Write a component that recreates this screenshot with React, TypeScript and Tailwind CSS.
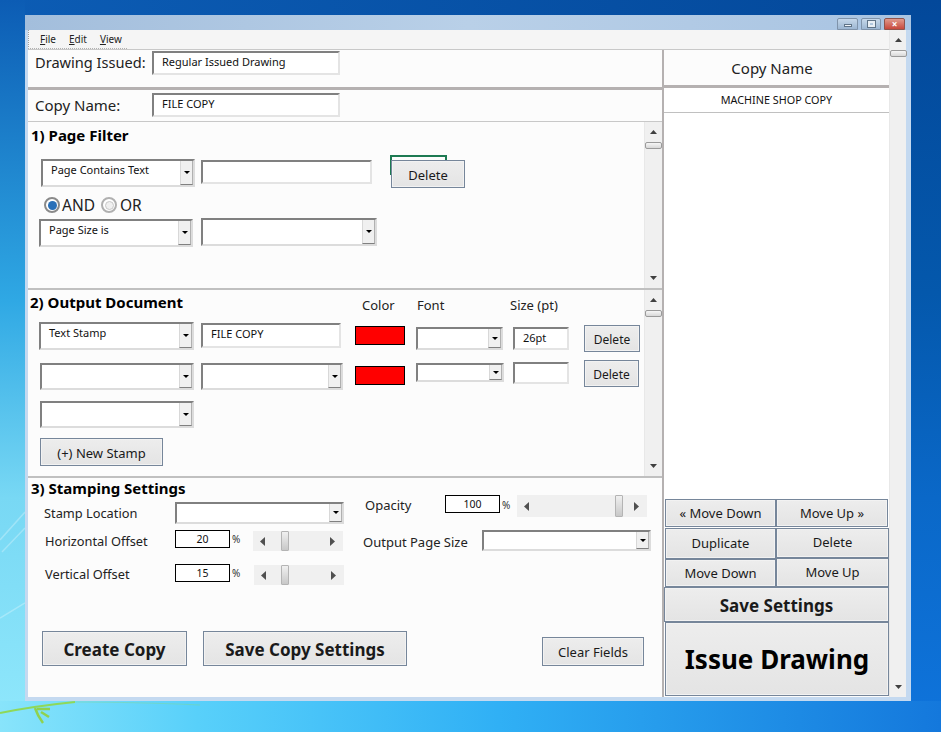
import type { ReactNode } from "react";

const font = "font-['Noto_Sans','Open_Sans',sans-serif]";

function Triangle({ dir }: { dir: "up" | "down" | "left" | "right" }) {
  const points = {
    up: "0,4 3.5,0 7,4",
    down: "0,0 7,0 3.5,4",
    left: "5,0 5,9 0,4.5",
    right: "0,0 0,9 5,4.5",
  }[dir];
  const box = dir === "up" || dir === "down" ? "0 0 7 4" : "0 0 5 9";
  const size = dir === "up" || dir === "down" ? "w-[7px] h-[4px]" : "w-[5px] h-[9px]";
  return (
    <svg viewBox={box} className={size}>
      <polygon points={points} fill={dir === "left" || dir === "right" ? "#505050" : "#404040"} />
    </svg>
  );
}

function Select({ className, text }: { className: string; text?: string }) {
  return (
    <div className={`flex shrink-0 bg-white border-2 border-t-[#808080] border-l-[#808080] border-r-[#dcdcdc] border-b-[#dcdcdc] ${className}`}>
      <div className="flex-1 pl-[8px] pt-[1px] text-[11px] leading-[16px] text-[#111]">{text}</div>
      <div className="w-[13px] flex items-center justify-center bg-[#f0f0f0] border-l border-l-[#d8d8d8] border-b border-b-[#808080] border-r border-r-[#b0b0b0]">
        <svg viewBox="0 0 6 3" className="w-[6px] h-[3px]">
          <polygon points="0,0 6,0 3,3" fill="#000" />
        </svg>
      </div>
    </div>
  );
}

function Input({ className, text }: { className: string; text?: string }) {
  return (
    <div className={`shrink-0 bg-white border-2 border-t-[#808080] border-l-[#808080] border-r-[#e4e4e4] border-b-[#e4e4e4] pt-[1px] text-[11px] leading-[16px] text-[#111] ${className}`}>
      {text}
    </div>
  );
}

function Btn({ className, children }: { className: string; children: ReactNode }) {
  return (
    <button className={`shrink-0 flex items-center justify-center border border-[#76869a] bg-[linear-gradient(#ededed,#e4e4e4)] shadow-[inset_0_0_0_1px_#f2f2f2] text-[#1a1a1a] ${className}`}>
      {children}
    </button>
  );
}

function VScroll({ className }: { className: string }) {
  return (
    <div className={`shrink-0 flex flex-col items-center bg-[#f0f0f0] border-l border-l-[#e8e8e8] ${className}`}>
      <div className="mt-[8px]">
        <Triangle dir="up" />
      </div>
      <div className="mt-[8px] w-[17px] h-[7px] rounded-[2px] border border-[#9a9a9a] bg-[linear-gradient(#f6f6f6,#d8d8d8)]" />
      <div className="flex-1" />
      <div className="mb-[8px]">
        <Triangle dir="down" />
      </div>
    </div>
  );
}

function HScroll({ className, thumbClass }: { className: string; thumbClass: string }) {
  return (
    <div className={`shrink-0 flex items-center bg-[#f0f0f0] ${className}`}>
      <div className="ml-[7px]">
        <Triangle dir="left" />
      </div>
      <div className={`h-full w-[8px] rounded-[1px] border border-[#b4b4b4] bg-[linear-gradient(#f0f0f0,#c8c8c8)] ${thumbClass}`} />
      <div className="flex-1" />
      <div className="mr-[8px]">
        <Triangle dir="right" />
      </div>
    </div>
  );
}

function Radio({ on }: { on: boolean }) {
  return (
    <div className={`shrink-0 w-[16px] h-[16px] rounded-full border-2 bg-white flex items-center justify-center ${on ? "border-[#8a8a8a]" : "border-[#b0b0b0]"}`}>
      <div className={on ? "w-[9px] h-[9px] rounded-full bg-[#2a70b8]" : "w-[9px] h-[9px] rounded-full border border-[#c8c8c8] bg-[#f0f0f0]"} />
    </div>
  );
}

function NumBox({ value }: { value: string }) {
  return (
    <div className="shrink-0 w-[55px] h-[18px] pt-[2px] border border-black bg-white flex items-center justify-center text-[10.5px] text-[#111]">
      {value}
    </div>
  );
}

function Percent({ className }: { className: string }) {
  return <div className={`shrink-0 text-[10px] leading-[18px] text-[#333] ${className}`}>%</div>;
}

function MenuItem({ first, rest }: { first: string; rest: string }) {
  return (
    <span className="text-[10px] text-[#222]">
      <span className="underline">{first}</span>
      {rest}
    </span>
  );
}

export default function App() {
  return (
    <div className={`${font} relative w-[941px] h-[732px] overflow-hidden pt-[15px] pl-[25px] bg-[linear-gradient(90deg,#0c5cb4,#03489a)]`}>
      {/* desktop wallpaper */}
      <div className="absolute left-0 top-0 w-[25px] h-[732px] bg-[linear-gradient(#0c5cb4_0%,#2fa8e4_41%,#78d8f4_68%,#90e8fc_100%)]" />
      <div className="absolute right-0 top-0 w-[30px] h-[732px] bg-[linear-gradient(#03489a_0%,#0458ac_40%,#0a68c8_68%,#0f74dc_100%)]" />
      <div className="absolute left-0 bottom-0 w-[941px] h-[31px] bg-[linear-gradient(90deg,#88e4fb_0%,#58d0fa_21%,#30b0f5_53%,#1478dc_100%)]" />
      <svg viewBox="0 0 25 140" className="absolute left-0 top-[500px] w-[25px] h-[140px]">
        <path d="M0 40 L25 12 M2 52 L25 28 M0 118 L25 103" stroke="#ffffff" strokeOpacity="0.28" strokeWidth="1.5" fill="none" />
      </svg>
      <svg viewBox="0 0 200 32" className="absolute left-0 top-[700px] w-[200px] h-[32px]">
        <path d="M0 13 C20 9 45 5 75 2" stroke="#8fd858" strokeWidth="2" fill="none" />
        <path d="M75 2 C110 2 160 3 200 5" stroke="#7cd8a0" strokeOpacity="0.5" strokeWidth="1" fill="none" />
        <path d="M35 8 C37 14 40 19 43 23 M37 9 L50 9 M41 12 L49 17" stroke="#8fd24f" strokeWidth="2.5" fill="none" />
      </svg>

      {/* window */}
      <div className="relative w-[886px] h-[686px] flex flex-col bg-[#c4d9f0]">
        <div className="h-[15px] flex justify-end gap-[3px] pt-[3px] pr-[6px] bg-[linear-gradient(90deg,#a3bedc,#b9d0e8_50%,#a9c4e2)]">
          <div className="w-[21px] h-[12px] flex items-end justify-center pb-[2px] rounded-t-[2px] border border-[#7f93aa] bg-[linear-gradient(#c6d8ea,#9cb6d2)]">
            <div className="w-[8px] h-[3px] bg-[#f0f4f8] border border-[#607488]" />
          </div>
          <div className="w-[20px] h-[12px] flex items-center justify-center rounded-t-[2px] border border-[#7f93aa] bg-[linear-gradient(#c6d8ea,#9cb6d2)]">
            <div className="w-[7px] h-[6px] border-2 border-[#e8eef4] outline outline-1 outline-[#607488]" />
          </div>
          <div className="w-[21px] h-[12px] flex items-center justify-center rounded-t-[2px] border border-[#90544c] bg-[linear-gradient(#e09a8c,#c8483c)] text-[10px] leading-none font-bold text-white">
            ×
          </div>
        </div>

        <div className="h-[667px] flex pl-[3px] pr-[5px]">
          <div className="w-[861px] flex flex-col bg-[#fcfcfc]">
            {/* menu */}
            <div className="h-[20px] shrink-0 bg-[#f5f5f5] border-b border-b-[#c8c8c8]">
              <div className="w-[99px] h-[19px] flex items-center gap-[13px] pl-[11px] border-l border-dotted border-l-[#a0a0a0] border-b border-b-[#b0b0b0]">
                <MenuItem first="F" rest="ile" />
                <MenuItem first="E" rest="dit" />
                <MenuItem first="V" rest="iew" />
              </div>
            </div>

            <div className="flex-1 flex min-h-0">
              {/* left column */}
              <div className="w-[636px] flex flex-col border-r-2 border-r-[#b5b1b1]">
                <div className="h-[37px] shrink-0 flex items-start">
                  <div className="w-[124px] pl-[7px] text-[14.6px] leading-[24px] text-[#222]">Drawing Issued:</div>
                  <Input className="w-[188px] h-[24px] pl-[8px] mt-[1px]" text="Regular Issued Drawing" />
                </div>
                <div className="h-[3px] shrink-0 bg-[#b5b1b1]" />
                <div className="h-[32px] shrink-0 flex items-start border-b border-b-[#c8c8c8]">
                  <div className="w-[124px] pl-[7px] pt-[3px] text-[15px] leading-[24px] text-[#222]">Copy Name:</div>
                  <Input className="w-[188px] h-[24px] pl-[8px] mt-[3px]" text="FILE COPY" />
                </div>

                {/* section 1 */}
                <div className="h-[166px] shrink-0 flex">
                  <div className="flex-1">
                    <div className="h-[33px] pl-[3px] pt-[2px] text-[15px] leading-[22px] font-bold text-black">1) Page Filter</div>
                    <div className="flex items-start">
                      <Select className="w-[154px] h-[28px] ml-[13px] mt-[4px]" text="Page Contains Text" />
                      <Input className="w-[171px] h-[24px] ml-[6px] mt-[5px]" />
                      <div className="relative ml-[18px] w-[75px] h-[33px]">
                        <div className="absolute left-0 top-0 w-[57px] h-[20px] border-2 border-[#1d7a52]" />
                        <Btn className="absolute left-[1px] top-[5px] w-[74px] h-[28px] pt-[3px] text-[13px]">Delete</Btn>
                      </div>
                    </div>
                    <div className="flex items-center mt-[8px] ml-[16px] h-[18px] text-[15.5px] leading-[18px] text-[#222]">
                      <Radio on />
                      <span className="ml-[2px] w-[39px]">AND</span>
                      <Radio on={false} />
                      <span className="ml-[3px]">OR</span>
                    </div>
                    <div className="flex items-start mt-[4px]">
                      <Select className="w-[154px] h-[28px] ml-[11px] mt-[1px]" text="Page Size is" />
                      <Select className="w-[176px] h-[28px] ml-[8px]" />
                    </div>
                  </div>
                  <VScroll className="w-[18px]" />
                </div>
                <div className="h-[2px] shrink-0 bg-[#c0c0c0]" />

                {/* section 2 */}
                <div className="h-[186px] shrink-0 flex">
                  <div className="flex-1">
                    <div className="h-[32px] flex items-start">
                      <div className="w-[334px] pl-[2px] pt-[1px] text-[15px] leading-[22px] font-bold text-black">2) Output Document</div>
                      <div className="w-[55px] pt-[6px] text-[13px] leading-[18px] text-[#222]">Color</div>
                      <div className="w-[93px] pt-[6px] text-[13px] leading-[18px] text-[#222]">Font</div>
                      <div className="pt-[6px] text-[13px] leading-[18px] text-[#222]">Size (pt)</div>
                    </div>
                    <div className="flex items-start">
                      <Select className="w-[155px] h-[28px] ml-[11px]" text="Text Stamp" />
                      <Input className="w-[140px] h-[25px] ml-[7px] mt-[1px] pl-[8px]" text="FILE COPY" />
                      <div className="w-[50px] h-[19px] ml-[14px] mt-[4px] bg-[#ff0000] border border-black" />
                      <Select className="w-[87px] h-[23px] ml-[11px] mt-[5px]" />
                      <Input className="w-[56px] h-[23px] ml-[10px] mt-[5px] pl-[8px]" text="26pt" />
                      <Btn className="w-[56px] h-[27px] ml-[15px] mt-[3px] pt-[2px] text-[12px]">Delete</Btn>
                    </div>
                    <div className="flex items-start mt-[8px]">
                      <Select className="w-[154px] h-[27px] ml-[12px] mt-[3px]" />
                      <Select className="w-[142px] h-[27px] ml-[7px] mt-[3px]" />
                      <div className="w-[50px] h-[19px] ml-[12px] mt-[6px] bg-[#ff0000] border border-black" />
                      <Select className="w-[88px] h-[19px] ml-[11px] mt-[3px]" />
                      <Input className="w-[56px] h-[22px] ml-[9px] mt-[2px]" />
                      <Btn className="w-[55px] h-[27px] ml-[15px] pt-[3px] text-[12px]">Delete</Btn>
                    </div>
                    <Select className="w-[154px] h-[27px] ml-[12px] mt-[11px]" />
                    <Btn className="w-[123px] h-[28px] ml-[12px] mt-[10px] pt-[3px] text-[13px]">(+) New Stamp</Btn>
                  </div>
                  <VScroll className="w-[18px]" />
                </div>
                <div className="h-[2px] shrink-0 bg-[#c0c0c0]" />

                {/* section 3 */}
                <div className="flex-1">
                  <div className="flex items-start">
                    <div className="w-[335px]">
                      <div className="h-[24px] pl-[3px] -mt-[1px] mb-[1px] text-[15px] leading-[22px] font-bold text-black">3) Stamping Settings</div>
                      <div className="flex items-start">
                        <div className="w-[147px] pl-[16px] text-[12.8px] leading-[22px] text-[#222]">Stamp Location</div>
                        <Select className="w-[169px] h-[22px]" />
                      </div>
                      <div className="flex items-start mt-[6px]">
                        <div className="w-[147px] pl-[17px] text-[12.8px] leading-[22px] text-[#222]">Horizontal Offset</div>
                        <NumBox value="20" />
                        <Percent className="ml-[2px] w-[21px]" />
                        <HScroll className="w-[90px] h-[20px] mt-[1px]" thumbClass="ml-[16px]" />
                      </div>
                      <div className="flex items-start mt-[12px]">
                        <div className="w-[147px] pl-[17px] text-[12.8px] leading-[20px] text-[#222]">Vertical Offset</div>
                        <NumBox value="15" />
                        <Percent className="ml-[2px] w-[22px]" />
                        <HScroll className="w-[90px] h-[20px] mt-[1px]" thumbClass="ml-[15px]" />
                      </div>
                    </div>
                    <div className="mt-[17px]">
                      <div className="flex items-start">
                        <div className="w-[82px] pl-[2px] text-[13px] leading-[20px] text-[#222]">Opacity</div>
                        <NumBox value="100" />
                        <Percent className="ml-[2px] w-[15px] mt-[1px]" />
                        <HScroll className="w-[130px] h-[22px]" thumbClass="ml-[86px]" />
                      </div>
                      <div className="flex items-start mt-[13px]">
                        <div className="w-[119px] text-[13px] leading-[24px] text-[#222]">Output Page Size</div>
                        <Select className="w-[169px] h-[21px]" />
                      </div>
                    </div>
                  </div>
                  <div className="flex items-start mt-[46px]">
                    <Btn className="w-[145px] h-[35px] ml-[14px] pt-[2px] text-[17px] font-bold">Create Copy</Btn>
                    <Btn className="w-[204px] h-[35px] ml-[16px] pt-[2px] text-[17px] font-bold">Save Copy Settings</Btn>
                    <Btn className="w-[102px] h-[29px] ml-[135px] mt-[6px] pt-[2px] text-[13px]">Clear Fields</Btn>
                  </div>
                </div>
              </div>

              {/* right column */}
              <div className="flex-1 flex flex-col bg-white">
                <div className="h-[35px] shrink-0 pt-[2px] pr-[9px] bg-[#fcfcfc] flex items-center justify-center text-[15px] text-[#222]">Copy Name</div>
                <div className="h-[3px] shrink-0 bg-[#b5b1b1]" />
                <div className="h-[25px] shrink-0 pt-[1px] flex items-center justify-center border-b border-b-[#c0c0c0] text-[10.8px] text-[#111]">MACHINE SHOP COPY</div>
                <div className="flex-1" />
                <div className="flex ml-[1px]">
                  <Btn className="w-[111px] h-[28px] pt-[2px] text-[13px]">« Move Down</Btn>
                  <Btn className="w-[112px] h-[28px] pt-[2px] text-[13px]">Move Up »</Btn>
                </div>
                <div className="flex ml-[1px] mt-[1px]">
                  <Btn className="w-[111px] h-[31px] text-[13px]">Duplicate</Btn>
                  <Btn className="w-[113px] h-[30px] text-[13px]">Delete</Btn>
                </div>
                <div className="flex ml-[1px]">
                  <Btn className="w-[111px] h-[28px] pt-[2px] text-[13px]">Move Down</Btn>
                  <Btn className="w-[113px] h-[29px] -mt-[1px] pt-[1px] text-[13px]">Move Up</Btn>
                </div>
                <Btn className="w-[225px] h-[35px] pt-[2px] text-[17px] font-bold">Save Settings</Btn>
                <Btn className="w-[224px] h-[74px] ml-[1px] text-[26px] font-bold text-black">Issue Drawing</Btn>
                <div className="h-[1px] bg-[#fcfcfc]" />
              </div>
            </div>
          </div>
          <VScroll className="w-[17px]" />
        </div>
        <div className="h-[4px]" />
      </div>
    </div>
  );
}
